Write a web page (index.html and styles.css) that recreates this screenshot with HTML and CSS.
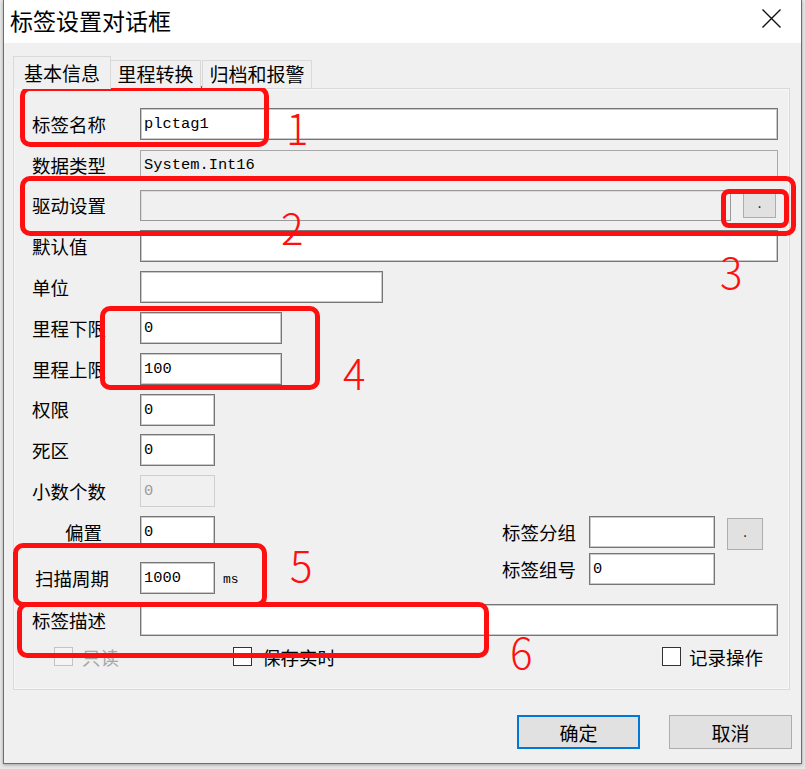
FILE: index.html
```html
<!DOCTYPE html>
<html lang="zh-CN">
<head>
<meta charset="utf-8">
<title>标签设置对话框</title>
<link rel="stylesheet" href="styles.css">
</head>
<body>
<div class="screen">
  <div class="window">
    <div class="titlebar">
      <span class="title">标签设置对话框</span>
      <svg class="close" viewBox="0 0 19 19" width="19" height="19"><path d="M0.5 0.5 L18.5 18.5 M18.5 0.5 L0.5 18.5" stroke="#111" stroke-width="1.4" fill="none"/></svg>
    </div>
    <div class="content">
      <div class="tabs">
        <div class="tab active">基本信息</div>
        <div class="tab t2">里程转换</div>
        <div class="tab t3">归档和报警</div>
      </div>
      <div class="panel">
        <div class="row"><span class="lbl">标签名称</span><div class="field w-full">plctag1</div></div>
        <div class="row gap"><span class="lbl">数据类型</span><div class="field readonly w-full">System.Int16</div></div>
        <div class="row gap"><span class="lbl">驱动设置</span><div class="field driver"></div><div class="dot-btn">.</div></div>
        <div class="row gap"><span class="lbl">默认值</span><div class="field w-full"></div></div>
        <div class="row gap"><span class="lbl">单位</span><div class="field w-unit"></div></div>
        <div class="row gap"><span class="lbl">里程下限</span><div class="field w-range">0</div></div>
        <div class="row gap"><span class="lbl">里程上限</span><div class="field w-range">100</div></div>
        <div class="row gap"><span class="lbl">权限</span><div class="field w-small">0</div></div>
        <div class="row gap"><span class="lbl">死区</span><div class="field w-small">0</div></div>
        <div class="row gap"><span class="lbl">小数个数</span><div class="field w-small disabled">0</div></div>
        <div class="mid">
          <div class="col-left">
            <div class="row"><span class="lbl indent">偏置</span><div class="field w-small">0</div></div>
            <div class="row scan"><span class="lbl scanl">扫描周期</span><div class="field w-small">1000</div><span class="ms">ms</span></div>
          </div>
          <div class="col-right">
            <div class="row"><span class="rlbl">标签分组</span><div class="field w-grp"></div><div class="grp-btn">.</div></div>
            <div class="row r2"><span class="rlbl">标签组号</span><div class="field w-grp">0</div></div>
          </div>
        </div>
        <div class="row desc"><span class="lbl">标签描述</span><div class="field w-full"></div></div>
        <div class="checks">
          <div class="chk c1 off"><span class="box"></span><span>只读</span></div>
          <div class="chk c2"><span class="box"></span><span>保存实时</span></div>
          <div class="chk c3"><span class="box"></span><span>记录操作</span></div>
        </div>
      </div>
      <div class="actions">
        <div class="btn primary">确定</div>
        <div class="btn">取消</div>
      </div>
    </div>
  </div>

  <div class="ann a1"></div>
  <div class="ann a2"></div>
  <div class="ann a3"></div>
  <div class="ann a4"></div>
  <div class="ann a5"></div>
  <div class="ann a6"></div>
  <div class="num n1">1</div>
  <div class="num n2">2</div>
  <div class="num n3">3</div>
  <div class="num n4">4</div>
  <div class="num n5">5</div>
  <div class="num n6">6</div>
</div>
</body>
</html>
```
FILE: styles.css
```css
* { box-sizing: border-box; }
html, body { margin: 0; padding: 0; }
body {
  background: #e6e6e6;
  font-family: "Noto Sans CJK SC", "Noto Sans", sans-serif;
  color: #000;
}
.screen {
  position: relative;
  width: 805px;
  height: 769px;
  overflow: hidden;
}
.window {
  margin-left: 3px;
  width: 799px;
  height: 764px;
  border: 1px solid #6e6e6e;
  border-top: none;
  background: #f0f0f0;
  display: flex;
  flex-direction: column;
  box-shadow: 0 1px 3px rgba(0,0,0,0.3);
}
.titlebar {
  height: 43px;
  flex: none;
  background: #fff;
  display: flex;
  align-items: center;
  padding-left: 6px;
}
.title {
  font-size: 23px;
  line-height: 1;
  margin-top: -3px;
}
.close {
  margin-left: auto;
  margin-right: 20px;
  align-self: flex-start;
  margin-top: 9px;
}
.content {
  flex: 1;
  display: flex;
  flex-direction: column;
  padding: 13px 11px 0 9px;
}
.tabs {
  display: flex;
  align-items: flex-end;
  height: 32px;
  flex: none;
  position: relative;
  z-index: 1;
}
.tab {
  height: 28px;
  border: 1px solid #d9d9d9;
  border-bottom: none;
  background: #f0f0f0;
  font-size: 19px;
  line-height: 26px;
  text-align: center;
  white-space: nowrap;
}
.tab.active {
  width: 98px;
  height: 33px;
  margin-bottom: -1px;
  line-height: 31px;
}
.tab.t2 { width: 90px; border-left: none; }
.tab.t3 { width: 110px; margin-left: 1px; }
.panel {
  height: 602px;
  flex: none;
  border: 1px solid #d9d9d9;
  box-shadow: inset 0 0 0 1px #f7f7f7;
  padding: 19px 10px 0 18px;
  display: flex;
  flex-direction: column;
}
.row {
  display: flex;
  align-items: center;
  height: 32px;
  flex: none;
}
.row.gap { margin-top: 8.8px; }
.lbl {
  width: 108px;
  flex: none;
  font-size: 18.5px;
  line-height: 1;
  white-space: nowrap;
}
.lbl.indent { padding-left: 33px; }
.lbl.scanl { padding-left: 3px; }
.field {
  height: 32px;
  border: 1px solid #767676;
  box-shadow: inset 0 0 0 1px #c9c9c9;
  background: #fff;
  font-family: "Liberation Mono", monospace;
  font-size: 15.4px;
  padding-left: 3px;
  display: flex;
  align-items: center;
  white-space: nowrap;
}
.w-full { flex: 1; margin-right: 1px; }
.w-unit { width: 243px; }
.w-range { width: 142px; }
.w-small { width: 75px; }
.w-grp { width: 126px; }
.field.readonly {
  height: 30px;
  background: #f0f0f0;
  border-color: #a8a8a8;
  box-shadow: none;
}
.field.driver {
  width: 591px;
  height: 31px;
  background: #f0f0f0;
  border-color: #999;
  box-shadow: inset 1px 1px 0 #dcdcdc;
}
.field.disabled {
  background: #f0f0f0;
  border-color: #cfcfcf;
  box-shadow: none;
  color: #9a9a9a;
}
.dot-btn {
  width: 33px;
  height: 25px;
  margin-left: 12px;
  background: #e1e1e1;
  border: 1px solid #adadad;
  font-size: 13px;
  line-height: 18px;
  text-align: center;
}
.mid {
  display: flex;
  justify-content: space-between;
  margin-top: 8.8px;
  flex: none;
}
.col-right { margin-right: 16px; }
.row.scan { margin-top: 14px; }
.row.r2 { margin-top: 5px; }
.ms {
  margin-left: 8px;
  font-family: "Liberation Mono", monospace;
  font-size: 13px;
  margin-top: 4px;
}
.rlbl {
  width: 87px;
  flex: none;
  font-size: 18.5px;
  line-height: 1;
  white-space: nowrap;
}
.grp-btn {
  width: 36px;
  height: 32px;
  margin-left: 12px;
  margin-top: 4px;
  background: #e1e1e1;
  border: 1px solid #adadad;
  font-size: 13px;
  line-height: 26px;
  text-align: center;
}
.row.desc { margin-top: 10px; }
.checks {
  margin-top: 11px;
  height: 20px;
  display: flex;
  align-items: center;
  flex: none;
}
.chk {
  display: flex;
  align-items: center;
  gap: 9px;
  font-size: 18.5px;
  line-height: 1;
  white-space: nowrap;
}
.chk .box {
  width: 19px;
  height: 19px;
  border: 1.5px solid #333;
  background: #fff;
  flex: none;
}
.chk.off { color: #a6a6a6; }
.chk.off .box { border-color: #c4c4c4; background: #f4f4f4; }
.chk.c1 { margin-left: 22px; width: 179px; }
.chk.c2 { gap: 10px; }
.chk.c3 { margin-left: auto; margin-right: 16px; gap: 8px; }
.actions {
  display: flex;
  justify-content: flex-end;
  gap: 29px;
  margin-top: 25px;
  margin-right: -2px;
}
.btn {
  width: 123px;
  height: 34px;
  background: #e1e1e1;
  border: 1px solid #adadad;
  font-size: 19px;
  line-height: 1;
  display: flex;
  align-items: center;
  justify-content: center;
}
.btn.primary { border: 2px solid #0078d7; }

/* red annotation overlays */
.ann {
  position: absolute;
  border: 5px solid #ff1010;
  border-radius: 10px;
}
.a1 { left: 20px; top: 86px; width: 249px; height: 61px; }
.a2 { left: 20px; top: 176px; width: 776px; height: 60px; }
.a3 { left: 721px; top: 189px; width: 68px; height: 39px; border-radius: 8px; }
.a4 { left: 100px; top: 306px; width: 220px; height: 84px; }
.a5 { left: 13px; top: 543px; width: 254px; height: 64px; }
.a6 { left: 17px; top: 602px; width: 472px; height: 56px; }
.num {
  position: absolute;
  color: #ff1010;
  font-family: "Noto Sans CJK SC", "Noto Sans", sans-serif;
  font-weight: 300;
  font-size: 42px;
  line-height: 42px;
}
.n1 { left: 286px; top: 106px; }
.n2 { left: 281px; top: 206px; }
.n3 { left: 720px; top: 250px; }
.n4 { left: 343px; top: 351px; }
.n5 { left: 290px; top: 543px; }
.n6 { left: 510px; top: 630px; }
```
